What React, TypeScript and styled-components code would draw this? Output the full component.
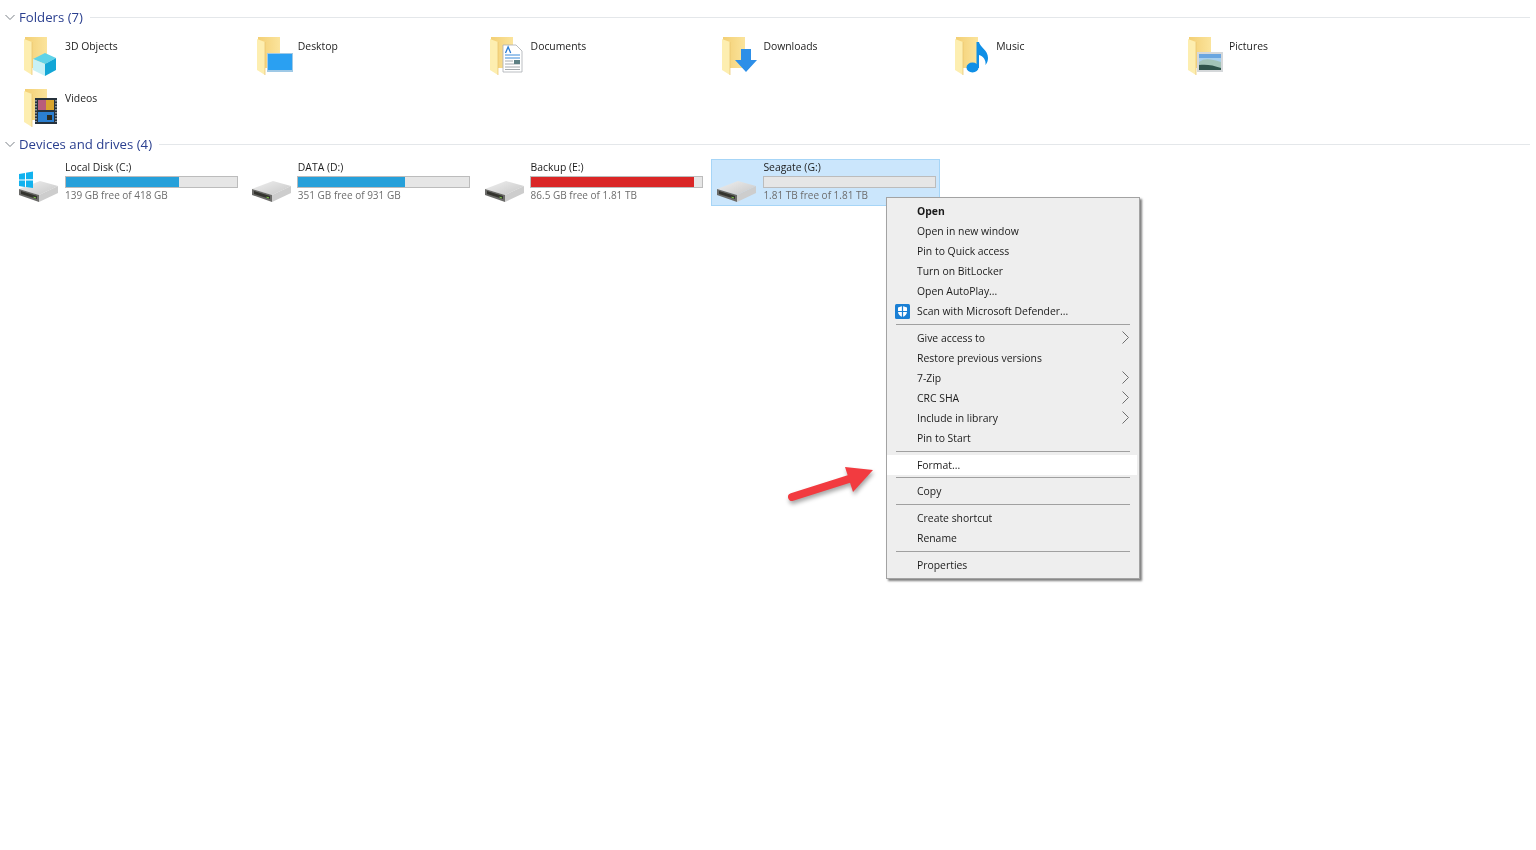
import React from "react";
import styled, { createGlobalStyle } from "styled-components";

const Global = createGlobalStyle`
  html, body { margin: 0; padding: 0; background: #fff; }
  body { font-family: "Open Sans", "Noto Sans", "Liberation Sans", sans-serif; }
`;

const Page = styled.div`
  position: relative;
  width: 1536px;
  height: 850px;
  overflow: hidden;
  padding-top: 7px;
  box-sizing: border-box;
  background: #fff;
  filter: blur(0.3px);
`;

const Header = styled.div`
  display: flex;
  align-items: center;
  height: 20px;
  padding: 0 6px 0 5px;
  color: #2a3f8f;
  font-size: 13.2px;
`;

const HeaderTitle = styled.span`
  margin-left: 4px;
  white-space: nowrap;
`;

const HeaderRule = styled.span`
  flex: 1;
  height: 1px;
  margin-left: 7px;
  background: #e4e7ea;
`;

const TileGrid = styled.div<{ $top: number }>`
  display: grid;
  grid-template-columns: repeat(6, 232.8px);
  margin: ${(p) => p.$top}px 0 0 13px;
`;

const FolderTile = styled.div`
  display: flex;
  height: 51.5px;
`;

const FolderIconBox = styled.div`
  width: 41px;
  padding: 6px 0 0 11px;
  box-sizing: content-box;
  & > svg { display: block; }
`;

const FolderName = styled.span`
  padding-top: 7px;
  font-size: 10.4px;
  line-height: 16px;
  color: #1c1c1c;
`;

const DriveTile = styled.div<{ $selected?: boolean }>`
  display: flex;
  box-sizing: border-box;
  width: 229px;
  height: 47px;
  border: 1px solid ${(p) => (p.$selected ? "#a6d5f7" : "transparent")};
  background: ${(p) => (p.$selected ? "#cbe6fc" : "transparent")};
`;

const DriveIconBox = styled.div`
  width: 51px;
  padding: 19px 0 0 4px;
  box-sizing: border-box;
  & > svg { display: block; overflow: visible; }
`;

const DriveBody = styled.div`
  display: flex;
  flex-direction: column;
  width: 173px;
  margin-top: -1px;
`;

const DriveName = styled.span`
  font-size: 10.4px;
  line-height: 16px;
  color: #1c1c1c;
`;

const UsageBar = styled.div`
  box-sizing: border-box;
  width: 173px;
  height: 12px;
  margin: 1px 0 0 -0.5px;
  border: 1px solid #bcbcbc;
  background: #e6e6e6;
`;

const UsageFill = styled.div<{ $full?: boolean }>`
  height: 100%;
  background: ${(p) => (p.$full ? "#da2626" : "#26a0da")};
`;

const DriveFree = styled.span`
  font-size: 10px;
  line-height: 15px;
  color: #6d6d6d;
`;

const Menu = styled.div`
  position: absolute;
  left: 886px;
  top: 197px;
  box-sizing: border-box;
  width: 254px;
  height: 382px;
  padding: 2.5px 0;
  border: 1px solid #a3a3a3;
  background: #eeeeee;
  box-shadow: 2px 2px 2px rgba(0, 0, 0, 0.5);
`;

const MenuRow = styled.div<{ $hot?: boolean; $bold?: boolean }>`
  position: relative;
  display: flex;
  align-items: center;
  height: 20.1px;
  margin-right: ${(p) => (p.$hot ? 2 : 0)}px;
  padding-left: 30px;
  font-size: 10.4px;
  font-weight: ${(p) => (p.$bold ? 700 : 400)};
  color: #1a1a1a;
  background: ${(p) => (p.$hot ? "#ffffff" : "transparent")};
`;

const MenuSeparator = styled.div`
  height: 1px;
  margin: 2.75px 9px;
  background: #a0a0a0;
`;

const MenuLeadIcon = styled.svg`
  position: absolute;
  left: 8px;
  top: 3px;
`;

const MenuChevron = styled.svg`
  position: absolute;
  right: 9px;
  top: 3.5px;
`;

const Callout = styled.svg`
  position: absolute;
  left: 780px;
  top: 458px;
  filter: drop-shadow(1px 3px 2px rgba(0, 0, 0, 0.35));
`;

const Chevron = () => (
  <svg width="10" height="7" viewBox="0 0 10 7" fill="none" stroke="#7a8087" strokeWidth="1">
    <path d="M.5 1 5 5.5 9.5 1" />
  </svg>
);

const FolderBase = () => (
  <>
    <path d="M1 0h22v31H1z" fill="url(#fb)" />
    <path d="M0 2l8 3v33l-8-5z" fill="#fdeeb0" />
    <path d="M8 5v33" stroke="#e7c26c" strokeWidth=".7" />
  </>
);

const Cube = () => (
  <>
    <path d="M9 22l12-6 11 5-11 6z" fill="#5fd3e8" />
    <path d="M9 22l12 5v12l-12-6z" fill="#c8f1f6" />
    <path d="M21 27l11-6v12l-11 6z" fill="#12a6d6" />
  </>
);

const Monitor = () => (
  <>
    <path d="M10 16h26v19H10z" fill="#9fc9e6" />
    <path d="M11 17h24v16H11z" fill="#2aa0f2" />
  </>
);

const DocPage = () => (
  <>
    <path d="M13 8h13l6 6v21H13z" fill="#fff" stroke="#a9adb2" strokeWidth=".8" />
    <path d="M15.500 16l2.600-6 2.600 6" fill="none" stroke="#2b7cd3" strokeWidth="1.300" />
    <path d="M15 18h15M15 21h15" stroke="#3a8ad8" strokeWidth="1" />
    <path d="M15 24h8M15 27h15M15 30h15M15 32.500h15" stroke="#8f959b" strokeWidth=".8" />
    <path d="M24 23h6v4h-6z" fill="#5d7f83" />
  </>
);

const DownArrow = () => <path d="M19 12h10v11h6L24 35 13 23h6z" fill="#2d8fe8" />;

const Note = () => (
  <>
    <ellipse cx="17.500" cy="30.500" rx="6" ry="5" fill="#0f8fe6" />
    <path d="M21.500 31V5h2.500c.8 5 9 8 9 16 0 3-1 5-2.500 7 .8-5-2.500-9-6.500-10v13z" fill="#0f8fe6" />
  </>
);

const Picture = () => (
  <>
    <path d="M9 15h26v20H9z" fill="#d5d8da" />
    <path d="M11 17h22v16H11z" fill="#a9d0ec" />
    <path d="M11 17h22v4H11z" fill="#6aa6e0" />
    <path d="M11 25c6-4 11-3 22 0v8H11z" fill="#a2c4b8" />
    <path d="M11 28c7-1 14 0 22 3v2H11z" fill="#2f544b" />
  </>
);

const Film = () => (
  <>
    <path d="M11 9h22v26H11z" fill="#26323c" />
    <path d="M14 11h16v10H14z" fill="#b85d7a" />
    <path d="M22 11h8v10h-8z" fill="#d9a52e" />
    <path d="M14 23h16v10H14z" fill="#2b7fd0" />
    <path d="M23 26h5v5h-5z" fill="#2b2b20" />
    <path d="M12 11v22M32 11v22" stroke="#c9d0d6" strokeWidth="1.200" strokeDasharray="1.500 1.500" />
  </>
);

const overlays: Record<string, React.ReactNode> = {
  cube: <Cube />,
  monitor: <Monitor />,
  doc: <DocPage />,
  down: <DownArrow />,
  note: <Note />,
  picture: <Picture />,
  film: <Film />,
};

const FolderIcon = ({ kind }: { kind: string }) => (
  <svg width="36" height="40" viewBox="0 0 36 40" overflow="visible">
    <defs>
      <linearGradient id="fb" x1="0" x2="1" y1="0" y2="0">
        <stop offset="0" stopColor="#f3cf74" />
        <stop offset="1" stopColor="#fbe49c" />
      </linearGradient>
    </defs>
    <FolderBase />
    {overlays[kind]}
  </svg>
);

const DriveIcon = ({ windows }: { windows?: boolean }) => (
  <svg width="41" height="25" viewBox="0 0 41 25">
    <defs>
      <linearGradient id="dt" x1="0" x2="1" y1="0" y2="1">
        <stop offset="0" stopColor="#f0f0f0" />
        <stop offset="1" stopColor="#c6c6c6" />
      </linearGradient>
    </defs>
    <path d="M1 10 22 2l18 5-19 9z" fill="url(#dt)" />
    <path d="M21 16l19-9v7l-19 9z" fill="#cdcdcd" />
    <path d="M1 10l20 6v7L1 16z" fill="#6a6a68" />
    <path d="M3 12l16 5v3L3 15z" fill="#33332e" />
    <path d="M15.500 18.200l2.500.7" stroke="#7ac943" strokeWidth="1" />
    {windows && (
      <g fill="#12b2ee">
        <path d="M1-5l6-1v6.500H1z" />
        <path d="M8-6.200l7-1.300v7.800H8z" />
        <path d="M1 1.500h6V8L1 7z" />
        <path d="M8 1.500h7V9L8 8z" />
      </g>
    )}
  </svg>
);

const folders = [
  ["3D Objects", "cube"],
  ["Desktop", "monitor"],
  ["Documents", "doc"],
  ["Downloads", "down"],
  ["Music", "note"],
  ["Pictures", "picture"],
  ["Videos", "film"],
];

const drives = [
  { name: "Local Disk (C:)", free: "139 GB free of 418 GB", used: 66.5, windows: true },
  { name: "DATA (D:)", free: "351 GB free of 931 GB", used: 62.3 },
  { name: "Backup (E:)", free: "86.5 GB free of 1.81 TB", used: 95.2, full: true },
  { name: "Seagate (G:)", free: "1.81 TB free of 1.81 TB", used: 0, selected: true },
];

type Entry = { label?: string; bold?: boolean; more?: boolean; hot?: boolean; shield?: boolean };

const menu: Entry[] = [
  { label: "Open", bold: true },
  { label: "Open in new window" },
  { label: "Pin to Quick access" },
  { label: "Turn on BitLocker" },
  { label: "Open AutoPlay..." },
  { label: "Scan with Microsoft Defender...", shield: true },
  {},
  { label: "Give access to", more: true },
  { label: "Restore previous versions" },
  { label: "7-Zip", more: true },
  { label: "CRC SHA", more: true },
  { label: "Include in library", more: true },
  { label: "Pin to Start" },
  {},
  { label: "Format...", hot: true },
  {},
  { label: "Copy" },
  {},
  { label: "Create shortcut" },
  { label: "Rename" },
  {},
  { label: "Properties" },
];

export default function App() {
  return (
    <Page>
      <Global />
      <Header>
        <Chevron />
        <HeaderTitle>Folders (7)</HeaderTitle>
        <HeaderRule />
      </Header>
      <TileGrid $top={4}>
        {folders.map(([name, kind]) => (
          <FolderTile key={name}>
            <FolderIconBox>
              <FolderIcon kind={kind} />
            </FolderIconBox>
            <FolderName>{name}</FolderName>
          </FolderTile>
        ))}
      </TileGrid>
      <Header>
        <Chevron />
        <HeaderTitle>Devices and drives (4)</HeaderTitle>
        <HeaderRule />
      </Header>
      <TileGrid $top={5}>
        {drives.map((d) => (
          <DriveTile key={d.name} $selected={d.selected}>
            <DriveIconBox>
              <DriveIcon windows={d.windows} />
            </DriveIconBox>
            <DriveBody>
              <DriveName>{d.name}</DriveName>
              <UsageBar>
                <UsageFill $full={d.full} style={{ width: `${d.used}%` }} />
              </UsageBar>
              <DriveFree>{d.free}</DriveFree>
            </DriveBody>
          </DriveTile>
        ))}
      </TileGrid>
      <Menu>
        {menu.map((m, i) =>
          m.label ? (
            <MenuRow key={i} $bold={m.bold} $hot={m.hot}>
              {m.shield && (
                <MenuLeadIcon width="15" height="15" viewBox="0 0 15 15">
                  <rect width="15" height="15" rx="1.500" fill="#1a7fd4" />
                  <path d="M7.500 2l4.500 1.500v4c0 3-2 4.500-4.500 5.500C5 12 3 10.500 3 7.500v-4z" fill="#fff" />
                  <path d="M7.500 2v11M3 7.500h9" stroke="#1a7fd4" strokeWidth="1.200" />
                </MenuLeadIcon>
              )}
              {m.label}
              {m.more && (
                <MenuChevron width="9" height="13" viewBox="0 0 9 13" fill="none" stroke="#6e6e6e" strokeWidth="1">
                  <path d="M1.500.5l6 6-6 6" />
                </MenuChevron>
              )}
            </MenuRow>
          ) : (
            <MenuSeparator key={i} />
          )
        )}
      </Menu>
      <Callout width="100" height="46" viewBox="0 0 100 46">
        <path d="M12 39 72 20" stroke="#f23b40" strokeWidth="8" strokeLinecap="round" />
        <path d="M65 9l28 3-20 22z" fill="#f23b40" />
      </Callout>
    </Page>
  );
}
